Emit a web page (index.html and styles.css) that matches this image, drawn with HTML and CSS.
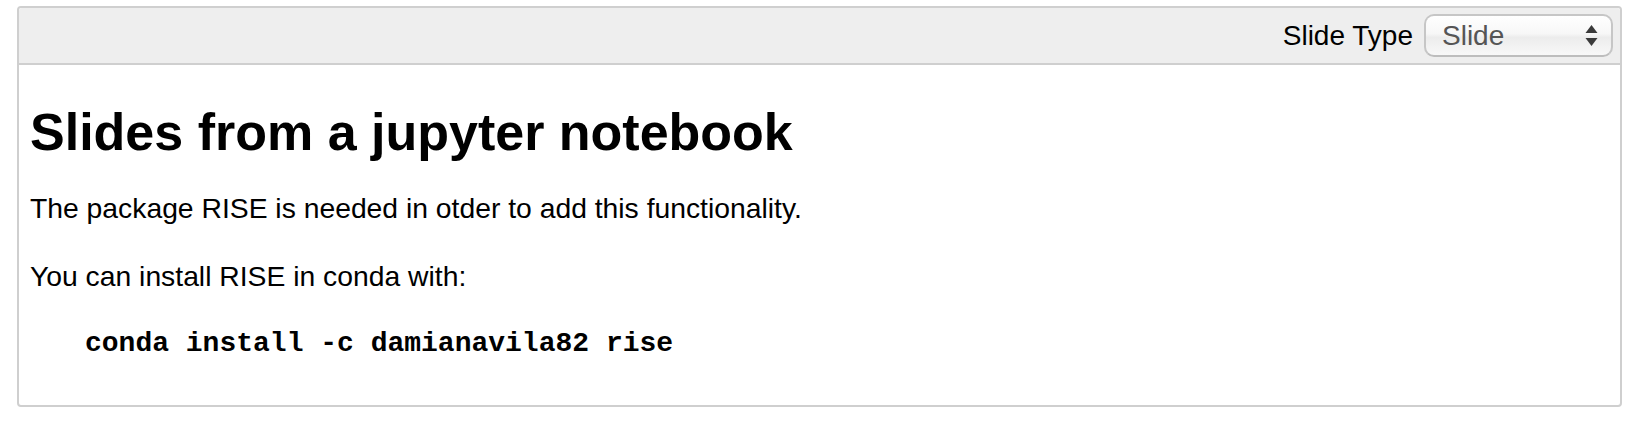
FILE: index.html
```html
<!DOCTYPE html>
<html>
<head>
<meta charset="utf-8">
<link rel="stylesheet" href="styles.css">
</head>
<body>
<div class="cell">
  <div class="toolbar">
    <span class="label">Slide Type</span>
    <div class="select">
      <span class="select-value">Slide</span>
      <svg class="arrows" width="13" height="21" viewBox="0 0 13 21">
        <polygon points="6.5,0 12.5,8 0.5,8" fill="#3a3a3a"/>
        <polygon points="0.5,13 12.5,13 6.5,21" fill="#3a3a3a"/>
      </svg>
    </div>
  </div>
  <div class="content">
    <h1 class="title">Slides from a jupyter notebook</h1>
    <p class="para">The package RISE is needed in otder to add this functionality.</p>
    <p class="para">You can install RISE in conda with:</p>
    <pre class="code">conda install -c damianavila82 rise</pre>
  </div>
</div>
</body>
</html>
```
FILE: styles.css
```css
html, body {
  margin: 0;
  padding: 0;
  background: #fff;
}
body {
  padding: 6px 30px 0 17px;
  font-family: "Liberation Sans", Arial, sans-serif;
  color: #000;
}
.cell {
  border: 2px solid #cfcfcf;
  border-radius: 4px;
  background: #fff;
}
.toolbar {
  height: 55px;
  background: #eeeeee;
  border-bottom: 2px solid #cfcfcf;
  border-radius: 3px 3px 0 0;
  display: flex;
  justify-content: flex-end;
  align-items: center;
  padding-right: 7px;
}
.label {
  font-size: 28px;
  margin-right: 11px;
}
.select {
  box-sizing: border-box;
  width: 189px;
  height: 43px;
  border: 2px solid #c6c6c6;
  border-bottom-color: #bdbdbd;
  border-radius: 10px;
  background: linear-gradient(#ffffff 0%, #f7f7f7 45%, #ececec 55%, #f8f8f8 100%);
  display: flex;
  align-items: center;
  justify-content: space-between;
  padding: 0 13px 0 16px;
}
.select-value {
  font-size: 28px;
  color: #555;
}
.arrows {
  display: block;
}
.content {
  padding: 39px 12px 43px 11px;
}
.title {
  font-size: 52px;
  font-weight: bold;
  line-height: 57px;
  margin: 0 0 29px 0;
}
.para {
  font-size: 28.3px;
  line-height: 36px;
  margin: 0 0 32px 0;
}
.code {
  font-family: "Liberation Mono", "Courier New", monospace;
  font-size: 28px;
  font-weight: bold;
  line-height: 36px;
  margin: 0;
  padding-left: 55px;
}
```
